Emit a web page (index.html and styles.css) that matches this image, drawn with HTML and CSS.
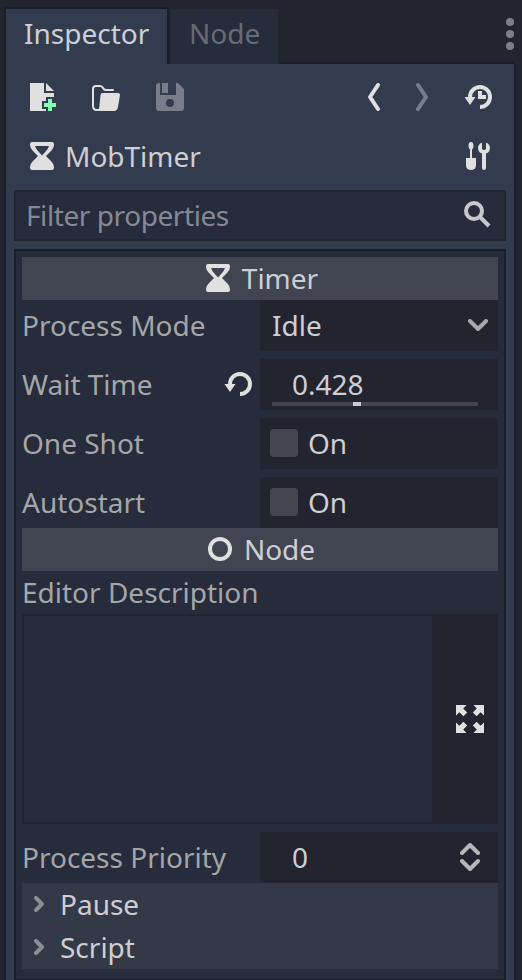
FILE: index.html
```
<!DOCTYPE html>
<html lang="en">
<head>
<meta charset="utf-8">
<title>Inspector</title>
<link rel="stylesheet" href="styles.css">
</head>
<body>
<svg class="defs" aria-hidden="true">
  <symbol id="timer" viewBox="0 0 32 32"><path fill-rule="evenodd" d="M6 2H26Q28 2 28 4V5Q28 8 25 11L20 16L25 21Q28 24 28 27V28Q28 30 26 30H6Q4 30 4 28V27Q4 24 7 21L12 16L7 11Q4 8 4 5V4Q4 2 6 2ZM9 6Q10 9 12 11L16 15.5L20 11Q22 9 23 6Z"/></symbol>
  <symbol id="reload" viewBox="0 0 32 32"><path class="stroke" d="M8 16A10 10 0 1 1 18 26"/><path d="M2.500 16H13.500L8 24Z"/></symbol>
  <symbol id="arrow" viewBox="0 0 14 14"><path d="M0 0H10.500L7.200 3.400L11.200 7.400L7.400 11.200L3.400 7.200L0 10.500Z"/></symbol>
  <symbol id="fold" viewBox="0 0 14 20"><path class="stroke round" d="M4 4L10 10L4 16"/></symbol>
</svg>
<main class="dock">
  <nav class="tabs">
    <div class="tab active">Inspector</div>
    <div class="tab">Node</div>
    <div class="tab-line"></div>
    <svg class="dots" viewBox="0 0 8 32"><circle cx="4" cy="4" r="4"/><circle cx="4" cy="16" r="4"/><circle cx="4" cy="28" r="4"/></svg>
  </nav>
  <section class="panel">
    <div class="toolbar">
      <svg class="icon" viewBox="0 0 32 32"><path d="M2 2H16V12H26V16H18V20H14V28H18V30H2ZM18 2L26 10H18Z"/><path class="green" d="M20 18H24V22H28V26H24V30H20V26H16V22H20Z"/></svg>
      <svg class="icon open" viewBox="0 0 32 32"><path class="thin" d="M10 29H7Q3 29 3 25V8Q3 5 6 5H10Q12 5 13 7Q14 9 16 9H23"/><path d="M13 12H28Q30 12 30 14L28 26Q27.300 30 24 30H7Q9 29 9.300 26L10.500 14Q10.700 12 13 12Z"/></svg>
      <svg class="icon save dim" viewBox="0 0 32 32"><path fill-rule="evenodd" d="M6 2V14H22V2H24L30 8V27Q30 30 27 30H5Q2 30 2 27V5Q2 2 5 2ZM16 18A4 4 0 1 0 16 26A4 4 0 1 0 16 18Z"/><path d="M8 2H14V12H8Z"/></svg>
      <span class="spacer"></span>
      <svg class="nav-icon" viewBox="0 0 16 32"><path class="stroke round" d="M12 4L4 16L12 28"/></svg>
      <svg class="nav-icon next dim" viewBox="0 0 16 32"><path class="stroke round" d="M4 4L12 16L4 28"/></svg>
      <svg class="icon history" viewBox="0 0 32 32"><use href="#reload"/><path d="M16 10H20V14H24V18H16Z"/></svg>
    </div>
    <div class="object">
      <svg class="icon"><use href="#timer"/></svg>
      <span class="object-name">MobTimer</span>
      <svg class="icon" viewBox="0 0 32 32"><path d="M9 2Q11.500 2 11.500 6Q11.500 8.500 10 9.500V18H14V25Q14 30 9 30Q4 30 4 25V18H8V9.500Q6.500 8.500 6.500 6Q6.500 2 9 2Z"/><path d="M20 2.400V9Q22 11 24 9V2.400Q28 4 28 8Q28 12 24 13.600V28Q24 30 22 30Q20 30 20 28V13.600Q16 12 16 8Q16 4 20 2.400Z"/></svg>
    </div>
    <div class="filter"><span>Filter properties</span>
      <svg class="icon" viewBox="0 0 32 32"><circle class="stroke" cx="14" cy="14" r="8"/><path class="stroke" d="M19.500 19.500L29 29"/></svg>
    </div>
    <div class="properties">
      <div class="category"><svg class="icon"><use href="#timer"/></svg><span>Timer</span></div>
      <div class="row">
        <div class="label">Process Mode</div>
        <div class="field select"><span>Idle</span><svg class="chevron" viewBox="0 0 20 12"><path class="stroke round" d="M2 2L10 10L18 2"/></svg></div>
      </div>
      <div class="row">
        <div class="label">Wait Time<svg class="icon"><use href="#reload"/></svg></div>
        <div class="field number">0.428<div class="slider"><div class="grabber"></div></div></div>
      </div>
      <div class="row">
        <div class="label">One Shot</div>
        <div class="field check"><i class="box"></i>On</div>
      </div>
      <div class="row last">
        <div class="label">Autostart</div>
        <div class="field check"><i class="box"></i>On</div>
      </div>
      <div class="category node"><svg class="icon" viewBox="0 0 32 32"><circle class="stroke" cx="16" cy="16" r="10"/></svg><span>Node</span></div>
      <div class="description-label">Editor Description</div>
      <div class="description">
        <div class="textarea"></div>
        <div class="expand">
          <svg viewBox="0 0 28 28"><use href="#arrow" width="14" height="14"/><use href="#arrow" width="14" height="14" transform="translate(28 0) scale(-1 1)"/><use href="#arrow" width="14" height="14" transform="translate(0 28) scale(1 -1)"/><use href="#arrow" width="14" height="14" transform="translate(28 28) scale(-1 -1)"/></svg>
        </div>
      </div>
      <div class="row last">
        <div class="label">Process Priority</div>
        <div class="field number"><span>0</span><svg class="spinner" viewBox="0 0 20 28"><path class="stroke round" d="M2 10L10 2L18 10M2 18L10 26L18 18"/></svg></div>
      </div>
      <div class="section"><svg class="fold"><use href="#fold"/></svg>Pause</div>
      <div class="section"><svg class="fold"><use href="#fold"/></svg>Script</div>
    </div>
  </section>
</main>
</body>
</html>
```
FILE: styles.css
```
* { box-sizing: border-box; }
html, body { margin: 0; height: 980px; overflow: hidden; }
body {
  background: #222530;
  color: #cdcfd5;
  font: 28px/38px "Noto Sans", sans-serif;
}
svg { display: block; flex: none; fill: #e0e0e0; stroke: none; }
.defs { position: absolute; width: 0; height: 0; }
.stroke { fill: none; stroke: #e0e0e0; stroke-width: 4; }
.round { stroke-linecap: round; stroke-linejoin: round; }
.thin { fill: none; stroke: #e0e0e0; stroke-width: 2; stroke-linecap: round; }
.green { fill: #84ffb1; }
.icon { width: 32px; height: 32px; }
.dim { opacity: .4; }

.dock { display: flex; flex-direction: column; height: 990px; padding: 7px 6px 0 4px; }

.tabs { display: flex; height: 57px; }
.tab {
  height: 55px;
  width: 107px;
  margin: 2px 0 0 2px;
  padding: 5px 0 0 18px;
  background: #262c3b;
  color: #686b76;
}
.tab.active {
  height: 57px;
  width: 165px;
  margin: 0;
  border: 2px solid #1a1e28;
  border-bottom: 0;
  background: #333b4f;
  color: #cdcfd5;
}
.tab-line { flex: 1; align-self: flex-end; height: 2px; margin-left: 2px; background: #1a1e28; }
.dots { width: 8px; height: 32px; margin: 11px 2px 0 -8px; fill: #7c7f88; }

.panel {
  flex: 1;
  padding: 0 8px;
  border: solid #1a1e28;
  border-width: 0 2px;
  background: #333b4f;
}
.toolbar { display: flex; height: 65px; padding: 17px 12px 0 14px; }
.open { margin-left: 30px; }
.save { margin-left: 32px; }
.spacer { flex: 1; }
.nav-icon { width: 16px; height: 32px; }
.next { margin-left: 32px; }
.history { margin-left: 32px; }

.object { display: flex; height: 61px; padding: 11px 12px 0 12px; }
.object-name { flex: 1; margin: -3px 0 0 7px; }

.filter {
  display: flex;
  align-items: center;
  height: 51px;
  padding: 0 10px 1px;
  border: 2px solid #222530;
  background: #262c3b;
  color: #868993;
  letter-spacing: -.42px;
}
.filter span { flex: 1; }
.filter svg { opacity: .87; margin-right: 2px; margin-top: -4px; }

.properties {
  height: 732px;
  margin-top: 8px;
  padding: 6px;
  border: 2px solid #1a1e28;
  background: #262c3b;
}
.category {
  display: flex;
  align-items: center;
  justify-content: center;
  gap: 8px;
  height: 43px;
  padding-bottom: 1px;
  background: #414552;
}
.category.node { padding-right: 1px; }
.row { display: grid; grid-template-columns: 1fr 1fr; height: 51px; margin-bottom: 8px; }
.row.last { margin-bottom: 0; }
.label { display: flex; align-items: center; justify-content: space-between; padding: 0 6px 1px 0; color: #a4a6a8; white-space: nowrap; }
.field { display: flex; align-items: center; background: #222530; }
.select { justify-content: space-between; padding: 0 10px 1px 12px; }
.chevron { width: 20px; height: 12px; opacity: .7; }
.number { position: relative; justify-content: space-between; padding: 0 18px 1px 32px; }
.slider { position: absolute; left: 12px; right: 20px; bottom: 4px; height: 4px; background: #434650; }
.grabber { width: 8px; height: 4px; margin-left: 81px; background: #c9cbd2; }
.check { gap: 10px; padding: 0 0 1px 10px; }
.box { width: 28px; height: 28px; border-radius: 4px; background: #434650; }
.description-label { height: 43px; padding-top: 2px; color: #a4a6a8; }
.description { display: flex; height: 210px; margin-bottom: 8px; padding: 2px 0 2px 2px; background: #222530; }
.textarea { width: 408px; background: #262c3b; }
.expand { display: flex; flex: 1; align-items: center; justify-content: center; padding-left: 10px; }
.expand svg { width: 28px; height: 28px; }
.spinner { width: 20px; height: 28px; opacity: .78; }
.section { display: flex; align-items: center; height: 43px; padding: 0 0 1px 10px; background: #343947; }
.fold { width: 14px; height: 20px; margin-right: 14px; opacity: .5; }
```
